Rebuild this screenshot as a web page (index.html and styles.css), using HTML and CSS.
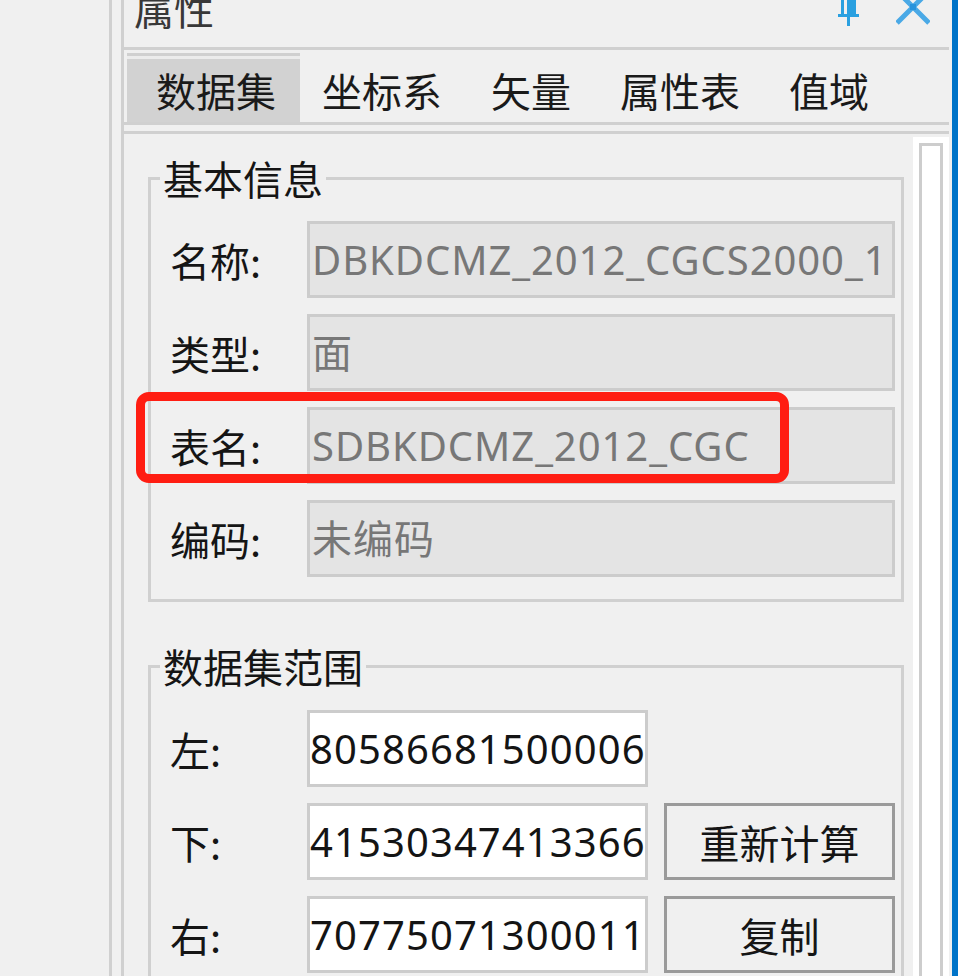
FILE: index.html
```html
<!DOCTYPE html>
<html lang="zh-CN">
<head>
<meta charset="utf-8">
<title>属性</title>
<link rel="stylesheet" href="styles.css">
</head>
<body>
<div class="screen">
  <div class="side"></div>
  <div class="panel">
    <div class="panel-main">
      <div class="titlebar">
        <span class="title">属性</span>
        <div class="title-icons">
          <svg class="pin" width="22" height="26" viewBox="0 0 22 26">
            <rect x="3" y="0" width="3" height="14" fill="#2aa0e0"/>
            <rect x="9" y="0" width="9" height="14" fill="#2aa0e0"/>
            <rect x="0" y="14" width="21" height="3" fill="#2aa0e0"/>
            <rect x="9" y="17" width="3" height="9" fill="#2aa0e0"/>
          </svg>
          <svg class="close" width="34" height="26" viewBox="0 0 34 26">
            <path d="M1 -9 L33 23 M33 -9 L1 23" stroke="#4aa9e6" stroke-width="5" fill="none"/>
            <rect x="14" y="4" width="6" height="6" fill="#2893dc"/>
          </svg>
        </div>
      </div>
      <div class="tabs">
        <div class="tab active">数据集</div>
        <div class="tab second">坐标系</div>
        <div class="tab">矢量</div>
        <div class="tab">属性表</div>
        <div class="tab">值域</div>
      </div>
      <div class="page">
        <div class="page-content">
          <fieldset class="group">
            <legend>基本信息</legend>
            <div class="group-body">
              <div class="row">
                <span class="label">名称:</span>
                <div class="field">DBKDCMZ_2012_CGCS2000_1</div>
              </div>
              <div class="row">
                <span class="label">类型:</span>
                <div class="field">面</div>
              </div>
              <div class="row">
                <span class="label">表名:</span>
                <div class="field">SDBKDCMZ_2012_CGC</div>
              </div>
              <div class="row">
                <span class="label">编码:</span>
                <div class="field">未编码</div>
              </div>
            </div>
          </fieldset>
          <fieldset class="group group-range">
            <legend>数据集范围</legend>
            <div class="group-body range-body">
              <div class="row">
                <span class="label">左:</span>
                <div class="field field-white">80586681500006</div>
              </div>
              <div class="row">
                <span class="label">下:</span>
                <div class="field field-white">41530347413366</div>
                <div class="btn">重新计算</div>
              </div>
              <div class="row">
                <span class="label">右:</span>
                <div class="field field-white">70775071300011</div>
                <div class="btn">复制</div>
              </div>
            </div>
          </fieldset>
        </div>
        <div class="scrollbar"><div class="thumb"></div></div>
      </div>
    </div>
    <div class="accent"></div>
  </div>
  <div class="highlight"></div>
</div>
</body>
</html>
```

FILE: styles.css
```css
* { box-sizing: border-box; }
html, body {
  margin: 0;
  padding: 0;
  background: #f0f0f0;
  width: 958px;
  height: 976px;
  overflow: hidden;
}
body {
  font-family: "Noto Sans", "Noto Sans CJK SC", sans-serif;
  font-size: 40px;
  color: #151515;
}
.screen {
  position: relative;
  display: flex;
  width: 958px;
  height: 976px;
  overflow: hidden;
}
.side {
  width: 112px;
  flex: none;
  border-right: 3px solid #d0d0d0;
}
.panel {
  flex: 1;
  display: flex;
  margin-left: 9px;
  border-left: 3px solid #d0d0d0;
  min-width: 0;
}
.panel-main {
  flex: 1;
  display: flex;
  flex-direction: column;
  min-width: 0;
}
.accent {
  width: 6px;
  flex: none;
  margin-left: 3px;
  background: #0073c8;
}

/* title bar */
.titlebar {
  height: 50px;
  flex: none;
  border-bottom: 3px solid #d0d0d0;
  display: flex;
  justify-content: space-between;
  align-items: flex-start;
  padding-left: 10px;
  padding-right: 19px;
  overflow: hidden;
}
.title {
  font-family: "Noto Sans CJK SC", sans-serif;
  font-size: 40px;
  line-height: 40px;
  margin-top: -12px;
  color: #383838;
}
.title-icons {
  display: flex;
  align-items: flex-start;
  gap: 36px;
}
.title-icons svg { display: block; }

/* tabs */
.tabs {
  flex: none;
  display: flex;
  height: 72px;
  margin-top: 3px;
  border-bottom: 3px solid #d0d0d0;
}
.tab {
  font-family: "Noto Sans CJK SC", sans-serif;
  padding: 8px 24.5px 0;
  line-height: 59px;
  height: 69px;
  color: #1a1a1a;
  white-space: nowrap;
}
.tab.active {
  margin-left: 3px;
  padding-left: 29px;
  padding-right: 24px;
  background: #d2d2d2;
  box-shadow: inset 0 3px 0 #d0d0d0, inset 0 6px 0 #ececec;
}
.tab.second { margin-left: -2.5px; }

/* page */
.page {
  flex: 1;
  display: flex;
  margin-top: 6px;
  border-top: 3px solid #d0d0d0;
  min-height: 0;
}
.page-content {
  flex: 1;
  min-width: 0;
}
.scrollbar {
  width: 36px;
  flex: none;
  margin-top: 3px;
  background: #ffffff;
  padding: 6px 6px 0 6px;
}
.thumb {
  height: 100%;
  border: 3px solid #cdcdcd;
  border-bottom: none;
  background: #ffffff;
}

/* group boxes */
.group {
  margin: 24px 9px 0 24px;
  padding: 0;
  border: 3px solid #d0d0d0;
  min-width: 0;
}
.group legend {
  margin-left: 9px;
  padding: 0 3px;
  font-family: "Noto Sans CJK SC", sans-serif;
  font-size: 40px;
  line-height: 40px;
  color: #151515;
}
.group-range { margin-top: 44px; }
.group-body {
  padding: 23px 6px 22px 19px;
  display: flex;
  flex-direction: column;
  gap: 16px;
}
.range-body { padding-top: 24px; }

.row {
  display: flex;
  align-items: center;
  height: 77px;
}
.label {
  width: 137px;
  flex: none;
  font-family: "Noto Sans CJK SC", sans-serif;
  line-height: 40px;
  color: #151515;
}
.field {
  flex: 1;
  min-width: 0;
  height: 77px;
  border: 3px solid #cccccc;
  background: #e4e4e4;
  color: #777777;
  line-height: 71px;
  padding-left: 2px;
  white-space: nowrap;
  overflow: hidden;
  letter-spacing: 0.95px;
}
.field-white {
  flex: none;
  width: 341px;
  background: #ffffff;
  color: #141414;
  padding: 0;
  text-align: right;
  letter-spacing: 1.1px;
}
.btn {
  width: 231px;
  height: 77px;
  flex: none;
  margin-left: 16px;
  border: 3px solid #9a9a9a;
  background: #f0f0f0;
  display: flex;
  align-items: center;
  justify-content: center;
  font-family: "Noto Sans CJK SC", sans-serif;
  line-height: 40px;
  color: #151515;
}

/* annotation overlay */
.highlight {
  position: absolute;
  left: 136px;
  top: 392px;
  width: 653px;
  height: 91px;
  border: 9px solid #ff1d12;
  border-radius: 13px;
}
```
